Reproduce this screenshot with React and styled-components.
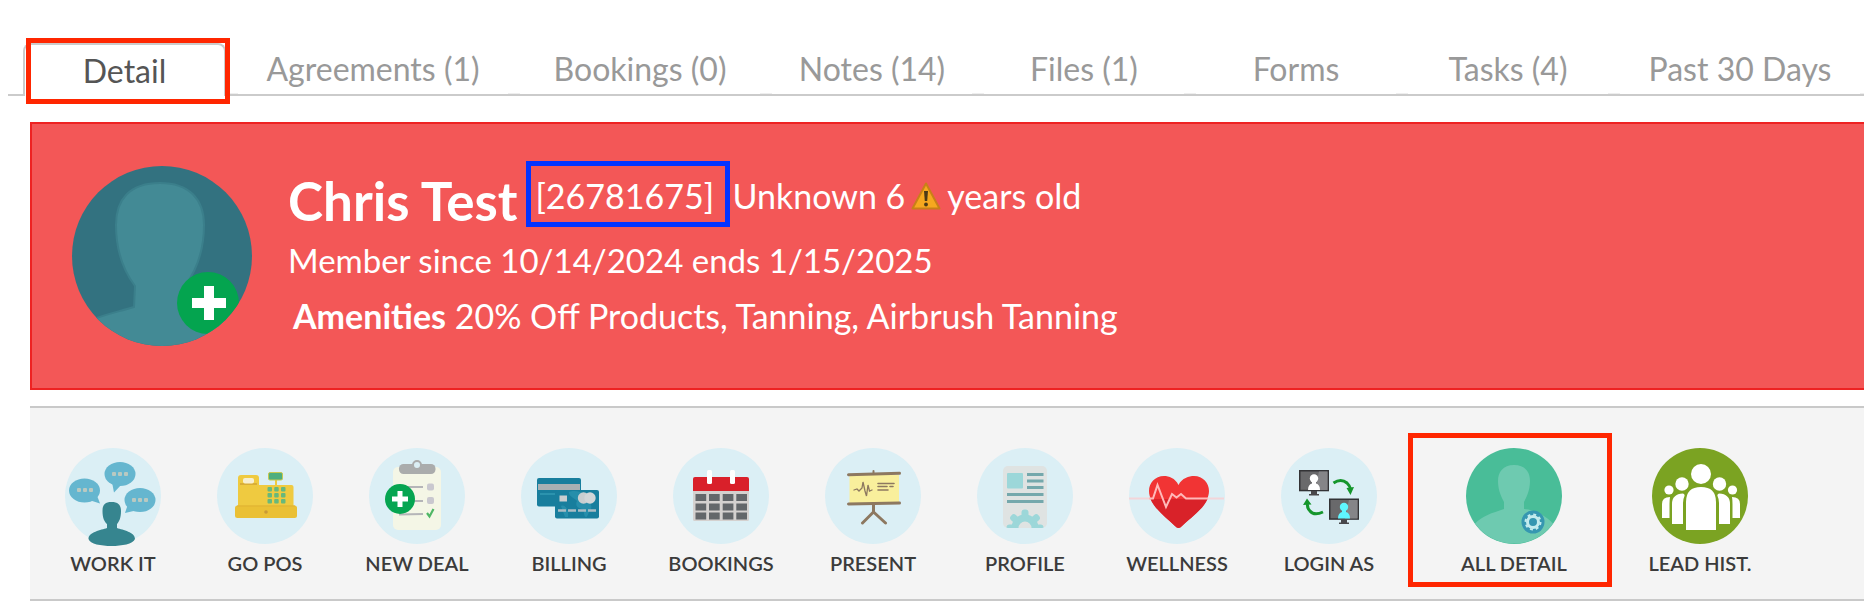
import React, { useState } from 'react';
import styled, { createGlobalStyle } from 'styled-components';

const GlobalStyle = createGlobalStyle`
  * {
    box-sizing: border-box;
  }

  body {
    margin: 0;
    background: #fff;
    font-family: Lato, 'Liberation Sans', sans-serif;
    overflow-x: hidden;
  }

  button {
    font: inherit;
    color: inherit;
    background: none;
    border: none;
    padding: 0;
    cursor: pointer;
  }
`;

const Page = styled.main`
  padding-top: 38px;
  overflow: hidden;
`;

const TabBar = styled.div`
  position: relative;
  display: flex;
  align-items: flex-end;
  height: 58px;
  margin-left: 8px;
  padding-left: 15px;
  border-bottom: 2px solid #cbcbcb;
`;

const Tab = styled.button`
  flex: none;
  width: ${(props) => props.$width || 200}px;
  height: 51px;
  font-size: 32px;
  line-height: 51px;
  color: #999;
  white-space: nowrap;
`;

const ActiveTab = styled(Tab)`
  position: relative;
  height: 53px;
  margin-bottom: -2px;
  border: 2px solid #cbcbcb;
  border-bottom: none;
  border-radius: 8px 8px 0 0;
  background: #fff;
  color: #555;

  &::after {
    content: '';
    position: absolute;
    inset: -7px -6px -8px 1px;
    border: 5px solid #ff2600;
  }
`;

const Divider = styled.span`
  flex: none;
  width: 12px;
  height: 1px;
  background: #eee;
`;

const Banner = styled.section`
  display: flex;
  align-items: flex-start;
  gap: 36px;
  height: 268px;
  margin: 26px -4px 0 30px;
  padding: 37px 40px;
  border: 2px solid #ee2222;
  background: #f35757;
  color: #fff;
`;

const AvatarButton = styled.button`
  flex: none;
  margin-top: 5px;
  border-radius: 50%;

  svg {
    display: block;
  }
`;

const Info = styled.div`
  font-size: 34px;
  line-height: 56px;
  white-space: nowrap;
`;

const NameRow = styled.div`
  display: flex;
  align-items: flex-start;
`;

const Name = styled.h1`
  margin: 0;
  padding: 9px 9px 0 0;
  font-size: 53px;
  line-height: 62px;
  font-weight: 700;
`;

const MemberId = styled.span`
  min-width: 204px;
  margin-right: 2px;
  padding: 4px 4px 0;
  border: 5px solid #0433ff;
  line-height: 52px;
`;

const Age = styled.span`
  display: flex;
  align-items: center;
  gap: 6px;
  line-height: 70px;
`;

const Line = styled.p`
  margin: 0;
`;

const Membership = styled(Line)`
  font-size: 33px;
`;

const Amenities = styled(Line)`
  padding-left: 5px;
`;

const ActionBar = styled.nav`
  display: flex;
  align-items: flex-start;
  margin: 16px 0 0 30px;
  padding: 25px 7px 12px;
  border-top: 2px solid #c9c9c9;
  border-bottom: 2px solid #c9c9c9;
  background: #f4f4f4;
`;

const Action = styled.button`
  flex: none;
  display: flex;
  flex-direction: column;
  align-items: center;
  width: 152px;
  padding-top: 15px;
  font-size: 20px;
  line-height: 24px;
  font-weight: 600;
  color: #3b3b3b;

  svg {
    display: block;
    overflow: visible;
    margin-bottom: 7px;
  }
`;

const HighlightedAction = styled(Action)`
  width: 204px;
  height: 154px;
  margin: 0 12px 0 3px;
  padding: 10px 0 0 8px;
  border: 5px solid #ff2600;
`;

const tabs = [
  { label: 'Agreements (1)', width: 270 },
  { label: 'Bookings (0)', width: 240 },
  { label: 'Notes (14)' },
  { label: 'Files (1)' },
  { label: 'Forms' },
  { label: 'Tasks (4)' },
  { label: 'Past 30 Days', width: 240 },
];

const Icon = ({ background = '#dbeff5', children }) => (
  <svg width="96" height="96" viewBox="0 0 96 96" aria-hidden="true">
    <circle cx="48" cy="48" r="48" fill={background} />
    {children}
  </svg>
);

const Dots = ({ x, y }) => (
  <g fill="#b9c9c1">
    <rect x={x - 8} y={y - 2} width="4" height="4" rx="1" />
    <rect x={x - 2} y={y - 2} width="4" height="4" rx="1" />
    <rect x={x + 4} y={y - 2} width="4" height="4" rx="1" />
  </g>
);

const WorkIcon = () => (
  <Icon>
    <g fill="#65b6cf">
      <ellipse cx="55" cy="26" rx="15.5" ry="12" />
      <path d="M47 34 L49 44.5 L57 36 Z" />
      <ellipse cx="19.5" cy="42.5" rx="15.5" ry="12" />
      <path d="M24 52 L35 55.5 L31 45 Z" />
      <ellipse cx="75" cy="52" rx="15.5" ry="12" />
      <path d="M63 56 L60 65 L73 62 Z" />
    </g>
    <Dots x={55} y={26} />
    <Dots x={20} y={42} />
    <Dots x={75} y={52} />
    <path
      fill="#36858f"
      d="M46.5 54 C53 54 56 57 56 63 C56 70 54 74 52 76 V80 C58 82 70 84 70 91 C68 96 57 98 46.5 98 C36 98 25 96 23.5 91 C23.5 84 36 82 42 80 V76 C39.500 74 37.500 70 37.500 63 C37.500 57 40 54 46.500 54 Z"
    />
  </Icon>
);

const PosIcon = () => (
  <Icon>
    <rect x="21" y="27" width="21" height="20" rx="3" fill="#efca40" />
    <rect x="21" y="37" width="55.5" height="24" rx="2" fill="#efca40" />
    <rect x="23" y="35" width="17" height="2" fill="#d9ae36" />
    <rect x="26" y="30" width="11" height="5.500" rx="2" fill="#f7efd0" />
    <path d="M59 32 V38" stroke="#efca40" strokeWidth="2" />
    <rect x="51.500" y="24.500" width="14" height="7.500" rx="1.500" fill="#4fae7e" stroke="#c8c94e" />
    <g fill="#67b87c">
      {[39, 45, 51].map((y) =>
        [50.5, 57.2, 64].map((x) => <rect key={`${x}-${y}`} x={x} y={y} width="4.500" height="4.500" rx="1" />)
      )}
    </g>
    <rect x="18" y="57.500" width="62" height="12.500" rx="2.500" fill="#eac035" />
    <path d="M20 58 H78" stroke="#dfb132" />
    <circle cx="49" cy="64" r="1.800" fill="#c99a35" />
  </Icon>
);

const DealIcon = () => (
  <Icon>
    <rect x="24" y="19" width="48" height="63" rx="5" fill="#f4f6e6" />
    <rect x="30" y="16" width="36.500" height="10" rx="4.500" fill="#aaacac" />
    <circle cx="48" cy="17" r="4" fill="#dbeff5" stroke="#aaacac" strokeWidth="2" />
    <path d="M38 39 H54 M38 53 H54 M30 66.500 L54 66" stroke="#b5b5b8" strokeWidth="2" />
    <rect x="58" y="35.500" width="7" height="7" rx="2" fill="#c9c8cf" />
    <rect x="58" y="49" width="7" height="7" rx="2" fill="#c9c8cf" />
    <path d="M58 65 L60.500 68.500 L64.500 61" fill="none" stroke="#4fb766" strokeWidth="2.200" />
    <circle cx="31" cy="51" r="15" fill="#06a551" />
    <path d="M31 43 V59 M23 51 H39" stroke="#fff" strokeWidth="5" />
  </Icon>
);

const BillingIcon = () => (
  <Icon>
    <rect x="16" y="30" width="44" height="28.500" rx="2" fill="#187e9d" />
    <rect x="17" y="36" width="42" height="6" fill="#a9b0b3" />
    <path d="M19 46 H34" stroke="#2b93ae" strokeWidth="2" />
    <rect x="34" y="42" width="44" height="28.500" rx="2" fill="#187e9d" />
    <path
      fill="#2c96b1"
      d="M48 44 C52 42 60 43 62 46 C66 51 72 55 70 61 C67 64 67 69 65 69 C62 68 64 62 61 61 C56 60 54 57 56 53 C53 50 47 48 48 44 Z M40 58 C44 56 48 62 47 69 H44 Z"
      opacity=".7"
    />
    <rect x="38.500" y="47.500" width="7.500" height="6" fill="#c9ced0" />
    <circle cx="62.500" cy="50" r="5.700" fill="#c9ced0" />
    <circle cx="69" cy="50" r="5.700" fill="#d2d6d8" />
    <path d="M37 62.500 H75" stroke="#a9bcc4" strokeWidth="2.500" strokeDasharray="8 2" />
  </Icon>
);

const CalendarIcon = () => (
  <Icon>
    <rect x="20" y="40" width="56" height="33" rx="1.500" fill="#d4d1cf" />
    <path d="M22 29 H74 Q76 29 76 31 V43 H20 V31 Q20 29 22 29 Z" fill="#d9202a" />
    <g fill="#63676a">
      {[46, 55.5, 64.5].map((y) =>
        [22.5, 36, 49.7, 63.3].map((x) => <rect key={`${x}-${y}`} x={x} y={y} width="10.700" height="7" />)
      )}
    </g>
    <rect x="34" y="22" width="5" height="14" rx="1.500" fill="#fff" />
    <rect x="57" y="22" width="5" height="14" rx="1.500" fill="#fff" />
  </Icon>
);

const PresentIcon = () => (
  <Icon>
    <path d="M24.500 27 H74 V55 H24.500 Z" fill="#f9ef9c" />
    <g fill="none" stroke="#8d7860" strokeLinecap="round">
      <path d="M23.500 26.800 L74.500 25.200 M23.500 56 L74.500 55" strokeWidth="3" />
      <path d="M48.500 23 V26" strokeWidth="2" />
      <path d="M48.500 56 V64 L37.500 75 M48.500 64 L60.500 75" strokeWidth="3" />
      <path d="M29 42 L32 41 L34 43 L37 40 L38 34 L40 43 L41.500 48 L43 37 L44.500 43 L47 42" strokeWidth="1.300" />
      <path d="M53 35.500 H69 M53 38.500 H62 M65 38.500 H68 M53 42 H63" strokeWidth="1.600" />
    </g>
  </Icon>
);

const ProfileIcon = () => (
  <Icon>
    <clipPath id="sheet">
      <rect x="26" y="18" width="44" height="62" rx="5" />
    </clipPath>
    <rect x="26" y="18" width="44" height="62" rx="5" fill="#dfe3e2" />
    <rect x="30" y="25" width="16" height="15.500" rx="1" fill="#9cd7d9" />
    <path d="M50 26.500 H66.500 M50 33 H66.500 M50 39.500 H66.500 M30 46.500 H66.500 M30 53.500 H66.500" stroke="#74a8ac" strokeWidth="2.800" />
    <g clipPath="url(#sheet)">
      <circle cx="48" cy="80" r="10" fill="none" stroke="#9cd7d9" strokeWidth="7" />
      {[-90, -48, 0, 48, 90].map((angle) => (
        <rect key={angle} x="44.500" y="61.500" width="7" height="9" rx="3" fill="#9cd7d9" transform={`rotate(${angle} 48 80)`} />
      ))}
    </g>
  </Icon>
);

const HeartIcon = () => (
  <Icon>
    <path d="M0 50.500 H95" stroke="#f3d5d9" strokeWidth="2" />
    <path
      fill="#f13434"
      d="M49.500 37 C46 30 40 28 35 28 C26 28 20 35 20 43 C20 57 37 69 46 78 Q49.500 82 53 78 C62 69 80 57 80 43 C80 35 74 28 65 28 C60 28 53 30 49.500 37 Z"
    />
    <path fill="#d92229" d="M21.500 51 C26 62 38 70 46 78 Q49.500 82 53 78 C61 70 74 62 78.500 51 Z" />
    <path
      d="M20 50.500 H24 L28.500 37 L37 59 L43 46 L47.500 49.500 L52 46 L57 50.500 H79"
      fill="none"
      stroke="#ffb9b9"
      strokeWidth="2"
    />
  </Icon>
);

const Monitor = ({ x, y, person }) => (
  <g transform={`translate(${x} ${y})`}>
    <rect x=".75" y=".75" width="28.500" height="19.800" fill="#69696b" stroke="#333336" strokeWidth="1.500" />
    <path d="M20 1.500 H28.500 V20 H16 Z" fill="#858588" />
    <path d="M12 21 H18 V24 H20 V25.500 H10 V24 H12 Z" fill="#48484b" />
    <circle cx="15" cy="8.500" r="4.200" fill={person} />
    <path d="M13 11 H17 V13.500 Q21 14.500 21 20 H9 Q9 14.500 13 13.500 Z" fill={person} />
  </g>
);

const LoginIcon = () => (
  <Icon>
    <Monitor x={18} y={22} person="#fff" />
    <Monitor x={48} y={50.5} person="#5ff6ff" />
    <g fill="none" stroke="#15962c" strokeWidth="3">
      <path d="M52.500 35 Q60 30 66 35 Q69 38 69.500 41" />
      <path d="M42 64 Q33 68 29 63 Q26 60 26.500 56" />
    </g>
    <path d="M65.500 40 L73 39 L69.500 47 Z M22 57 L26 50.500 L30.500 56.500 Z" fill="#15962c" />
  </Icon>
);

const AllDetailIcon = () => (
  <Icon background="#49bd98">
    <path
      fill="#6ecab0"
      d="M48 17 C59 17 64 24 64 33 C64 43 60 50 58 54 V61 C70 62 80 68 87 75.500 A48 48 0 0 1 9 75.500 C16 68 26 65 38 61 V54 C36 50 32 43 32 33 C32 24 37 17 48 17 Z"
    />
    <circle cx="67" cy="74" r="11.500" fill="#3697b1" />
    <circle cx="67" cy="74" r="7.500" fill="none" stroke="#c4ecee" strokeWidth="2" strokeDasharray="2.945 2.945" />
    <circle cx="67" cy="74" r="5.500" fill="none" stroke="#c4ecee" strokeWidth="3" />
  </Icon>
);

const LeadIcon = () => (
  <Icon background="#7ba322">
    <g fill="#fff">
      <circle cx="49" cy="26" r="10" />
      <path d="M34 82 V54 Q34 39 49 39 Q64 39 64 54 V82 Z" />
      <circle cx="30" cy="36" r="6.700" />
      <circle cx="67.500" cy="36" r="6.700" />
      <path d="M20 76 V56 Q20 46 31 45.500 Q33 46 32.500 48 Q31 51 31 55 V76 Z" />
      <path d="M78 76 V56 Q78 46 67 45.500 Q65 46 65.500 48 Q67 51 67 55 V76 Z" />
      <circle cx="17" cy="42" r="4.600" />
      <circle cx="80.500" cy="42" r="4.600" />
      <path d="M10 70 V56 Q10 49 18 49 Q17.500 52 17.500 56 V70 Z" />
      <path d="M88 70 V56 Q88 49 80 49 Q80.500 52 80.500 56 V70 Z" />
    </g>
  </Icon>
);

const Avatar = () => (
  <svg width="180" height="180" viewBox="0 0 180 180" aria-hidden="true">
    <clipPath id="avatar">
      <circle cx="90" cy="90" r="90" />
    </clipPath>
    <g clipPath="url(#avatar)">
      <rect width="180" height="180" fill="#337280" />
      <path
        fill="#438a95"
        stroke="#3b7f8b"
        strokeWidth="2"
        d="M88 17 C117 17 132 33 132 59 C132 84 124 105 113 120 V141 C130 145 145 149 160 158 V190 H10 V158 C28 149 46 146 62 141 L63 120 C51 104 44 82 44 59 C44 33 58 17 88 17 Z"
      />
      <circle cx="136" cy="137" r="31" fill="#04a44f" />
      <path d="M137 120 V154 M120 137 H154" stroke="#fff" strokeWidth="10" />
    </g>
  </svg>
);

const Warning = () => (
  <svg width="30" height="28" viewBox="0 0 30 28" role="img" aria-label="Warning">
    <path d="M15 1.500 L28.500 26.500 H1.500 Z" fill="#f6a81f" stroke="#c98018" strokeWidth="2" strokeLinejoin="round" />
    <path d="M13 9 H17 L16.200 19 H13.800 Z" fill="#4b3a17" />
    <circle cx="15" cy="22.500" r="1.900" fill="#4b3a17" />
  </svg>
);

const actions = [
  { label: 'WORK IT', icon: <WorkIcon /> },
  { label: 'GO POS', icon: <PosIcon /> },
  { label: 'NEW DEAL', icon: <DealIcon /> },
  { label: 'BILLING', icon: <BillingIcon /> },
  { label: 'BOOKINGS', icon: <CalendarIcon /> },
  { label: 'PRESENT', icon: <PresentIcon /> },
  { label: 'PROFILE', icon: <ProfileIcon /> },
  { label: 'WELLNESS', icon: <HeartIcon /> },
  { label: 'LOGIN AS', icon: <LoginIcon /> },
  { label: 'ALL DETAIL', icon: <AllDetailIcon />, highlighted: true },
  { label: 'LEAD HIST.', icon: <LeadIcon /> },
];

const App = () => {
  const [active, setActive] = useState('Detail');

  return (
    <>
      <GlobalStyle />
      <Page>
        <TabBar role="tablist">
          <ActiveTab role="tab" $width={203} aria-selected={active === 'Detail'} onClick={() => setActive('Detail')}>
            Detail
          </ActiveTab>
          {tabs.map((tab) => (
            <React.Fragment key={tab.label}>
              <Divider />
              <Tab
                role="tab"
                $width={tab.width}
                aria-selected={active === tab.label}
                onClick={() => setActive(tab.label)}
              >
                {tab.label}
              </Tab>
            </React.Fragment>
          ))}
          <Divider />
        </TabBar>

        <Banner>
          <AvatarButton aria-label="Add photo">
            <Avatar />
          </AvatarButton>
          <Info>
            <NameRow>
              <Name>Chris Test</Name>
              <MemberId>[26781675]</MemberId>
              <Age>
                Unknown 6
                <Warning />
                years old
              </Age>
            </NameRow>
            <Membership>Member since 10/14/2024 ends 1/15/2025</Membership>
            <Amenities>
              <strong>Amenities</strong> 20% Off Products, Tanning, Airbrush Tanning
            </Amenities>
          </Info>
        </Banner>

        <ActionBar>
          {actions.map(({ label, icon, highlighted }) => {
            const Item = highlighted ? HighlightedAction : Action;
            return (
              <Item key={label}>
                {icon}
                {label}
              </Item>
            );
          })}
        </ActionBar>
      </Page>
    </>
  );
};

export default App;
